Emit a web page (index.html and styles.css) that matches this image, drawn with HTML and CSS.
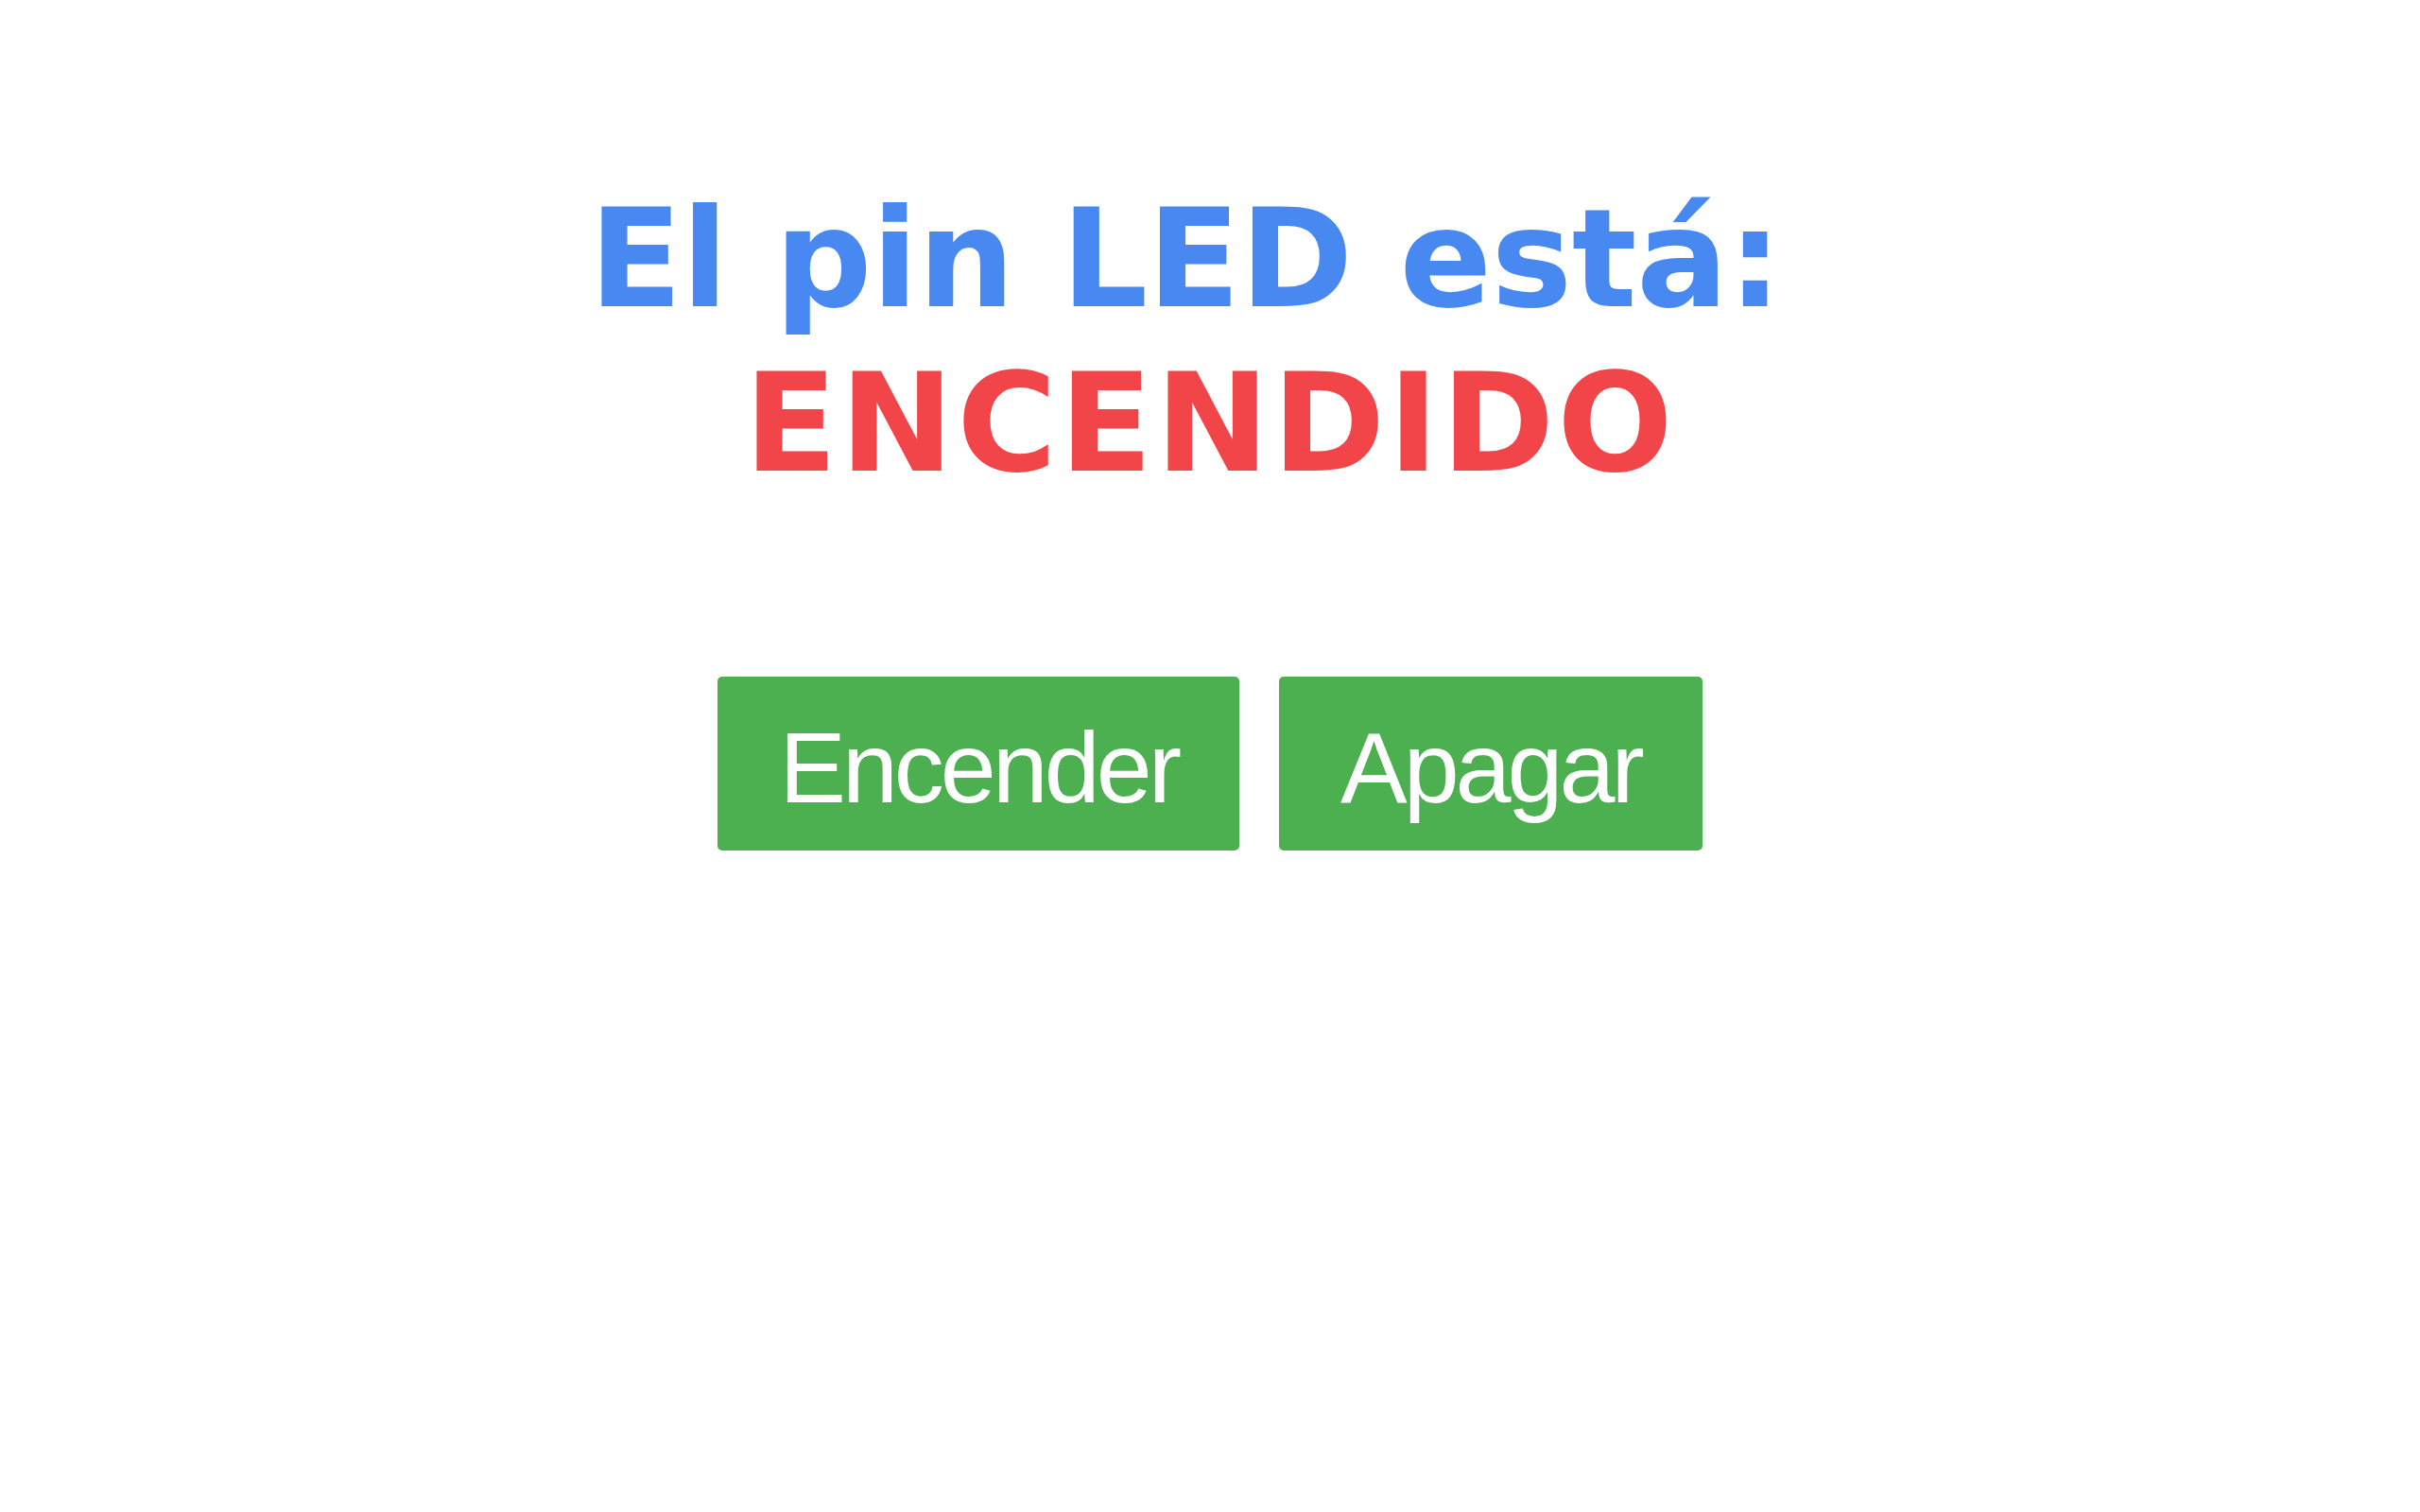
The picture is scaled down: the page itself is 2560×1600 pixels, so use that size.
FILE: index.html
```html
<!DOCTYPE html>
<html lang="es">
<head>
<meta charset="utf-8">
<title>LED</title>
<link rel="stylesheet" href="styles.css">
</head>
<body>
<main class="page">
  <h1 class="title">
    <span class="label">El pin LED está:</span>
    <span class="state">ENCENDIDO</span>
  </h1>
  <div class="actions">
    <a class="button" href="#">Encender</a>
    <a class="button" href="#">Apagar</a>
  </div>
</main>
</body>
</html>
```

FILE: styles.css
```css
html, body {
  margin: 0;
  padding: 0;
  background: #ffffff;
}

.page {
  padding-top: 187px;
  text-align: center;
}

.title {
  margin: 0;
  font-family: "DejaVu Sans", Verdana, sans-serif;
  font-weight: bold;
  font-size: 144px;
  line-height: 174px;
}

.label {
  display: block;
  color: #4789f0;
  letter-spacing: -0.5px;
  padding-right: 52px;
}

.state {
  display: block;
  color: #f2454a;
  letter-spacing: 3px;
}

.actions {
  display: flex;
  justify-content: center;
  gap: 42px;
  margin-top: 181px;
}

.button {
  display: inline-block;
  background-color: #4caf50;
  color: #ffffff;
  text-decoration: none;
  font-family: "Liberation Sans", Arial, sans-serif;
  font-size: 106px;
  letter-spacing: -4px;
  line-height: 106px;
  padding: 43px 65px 35px;
  border-radius: 5px;
}
```
